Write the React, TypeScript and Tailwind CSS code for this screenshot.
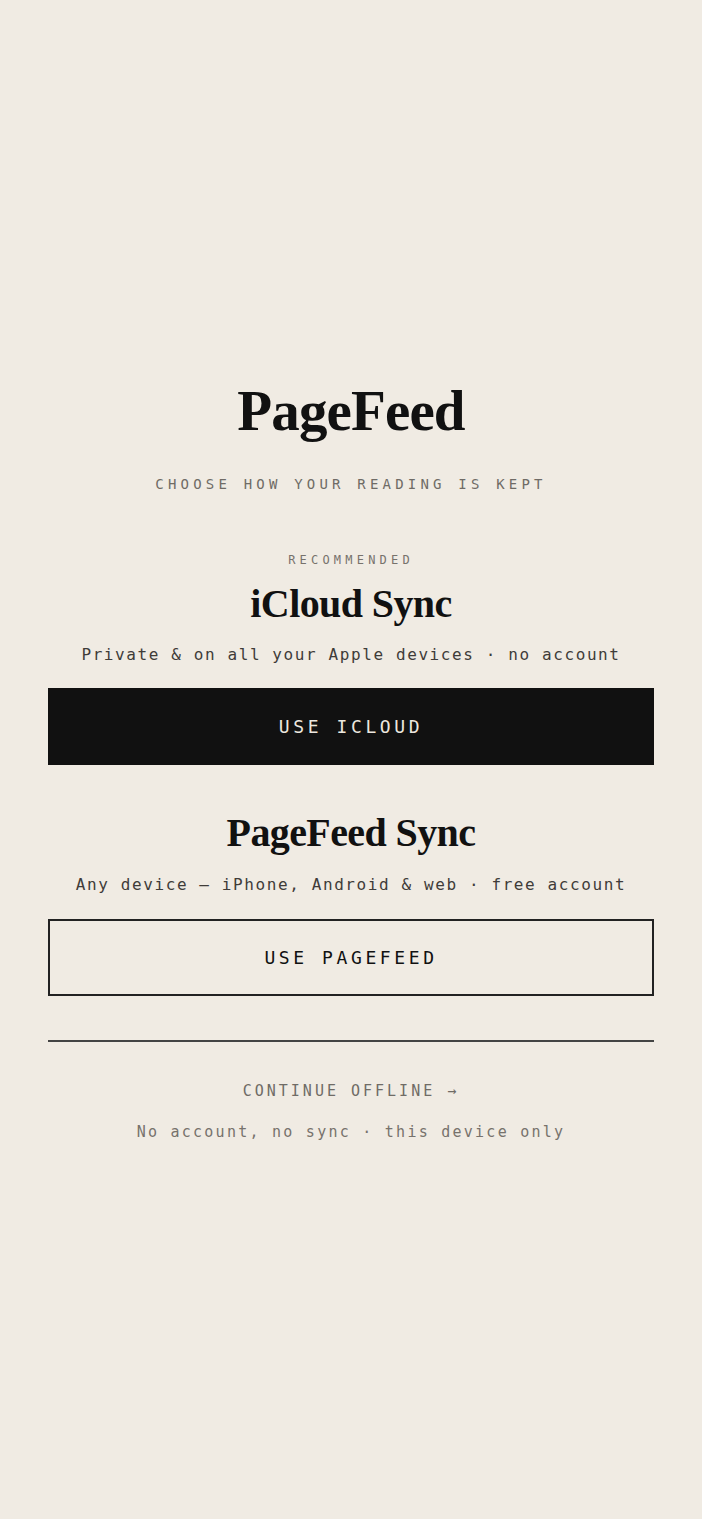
const mono = "font-['DejaVu_Sans_Mono','Liberation_Mono',monospace]";
const serif = "font-['Liberation_Serif','DejaVu_Serif',serif]";

const App: React.FC = () => {
  return (
    <div className="min-h-screen w-full bg-[#f0ebe3] flex flex-col justify-center items-center px-12 pt-[6px]">
      <div className="w-full flex flex-col items-center text-center">
        <h1 className={`${serif} font-bold text-[57px] leading-none tracking-[-0.015em] text-[#111]`}>
          PageFeed
        </h1>
        <p className={`${mono} mt-[35px] text-[14px] tracking-[0.3em] text-[#6f6b66]`}>
          CHOOSE HOW YOUR READING IS KEPT
        </p>

        {/* iCloud option */}
        <p className={`${mono} mt-[56px] text-[12px] tracking-[0.35em] text-[#77726c]`}>
          RECOMMENDED
        </p>
        <h2 className={`${serif} mt-[15px] font-bold text-[40px] leading-none tracking-[-0.015em] text-[#111]`}>
          iCloud Sync
        </h2>
        <p className={`${mono} mt-[19px] text-[16px] tracking-[0.1em] text-[#3f3c39]`}>
          Private &amp; on all your Apple devices · no account
        </p>
        <button className={`${mono} mt-[21px] w-full h-[77px] bg-[#111] text-[#ece7df] text-[18px] tracking-[0.2em]`}>
          USE ICLOUD
        </button>

        {/* PageFeed account option */}
        <h2 className={`${serif} mt-[48px] font-bold text-[40px] leading-none tracking-[-0.015em] text-[#111]`}>
          PageFeed Sync
        </h2>
        <p className={`${mono} mt-[20px] text-[16px] tracking-[0.1em] text-[#3f3c39]`}>
          Any device — iPhone, Android &amp; web · free account
        </p>
        <button className={`${mono} mt-[22px] w-full h-[77px] border-2 border-[#222] text-[#111] text-[18px] tracking-[0.2em]`}>
          USE PAGEFEED
        </button>

        <div className="mt-[44px] w-full h-[2px] bg-[#444]" />

        <button className={`${mono} mt-[38px] text-[15px] tracking-[0.2em] text-[#6f6b66]`}>
          CONTINUE OFFLINE →
        </button>
        <p className={`${mono} mt-[18px] text-[15px] tracking-[0.15em] text-[#77726c]`}>
          No account, no sync · this device only
        </p>
      </div>
    </div>
  );
};

export default App;
